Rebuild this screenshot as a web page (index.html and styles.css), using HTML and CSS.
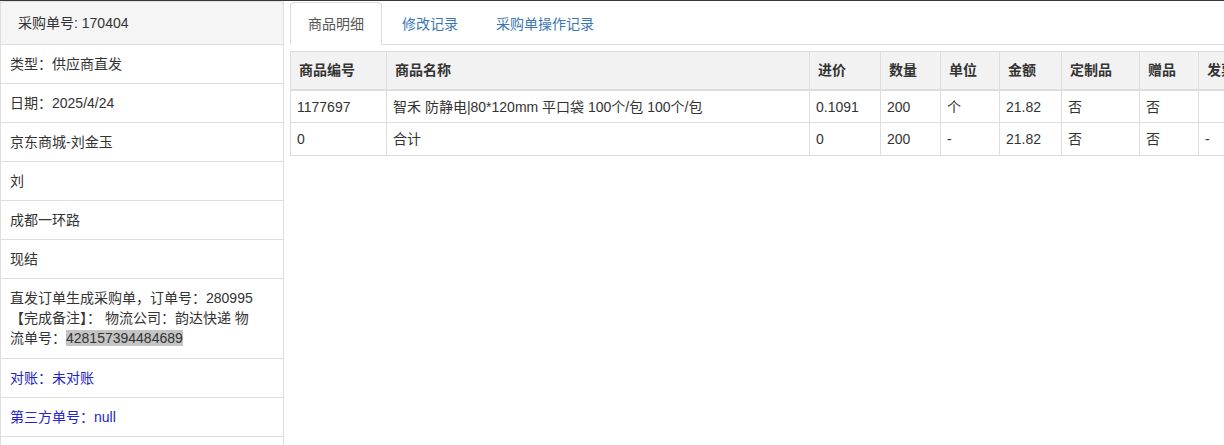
FILE: index.html
```html
<!DOCTYPE html>
<html lang="zh-CN">
<head>
<meta charset="utf-8">
<title>采购单详情</title>
<link rel="stylesheet" href="styles.css">
</head>
<body>
<div class="topbar"></div>
<div class="layout">
  <aside class="info-panel">
    <div class="panel-head">采购单号: 170404</div>
    <div class="panel-row">类型：供应商直发</div>
    <div class="panel-row">日期：2025/4/24</div>
    <div class="panel-row">京东商城-刘金玉</div>
    <div class="panel-row">刘</div>
    <div class="panel-row">成都一环路</div>
    <div class="panel-row">现结</div>
    <div class="panel-row multi">直发订单生成采购单，订单号：280995<br>【完成备注】： 物流公司：韵达快递 物<br>流单号：<span class="selected">428157394484689</span></div>
    <div class="panel-row link">对账：未对账</div>
    <div class="panel-row link">第三方单号：null</div>
    <div class="panel-row"></div>
  </aside>
  <main class="detail">
    <ul class="tabs">
      <li class="tab active"><a>商品明细</a></li>
      <li class="tab"><a>修改记录</a></li>
      <li class="tab"><a>采购单操作记录</a></li>
    </ul>
    <table class="goods">
      <colgroup>
        <col class="c-code"><col class="c-name"><col class="c-price"><col class="c-qty"><col class="c-unit"><col class="c-amt"><col class="c-custom"><col class="c-gift"><col class="c-inv">
      </colgroup>
      <thead>
        <tr><th>商品编号</th><th>商品名称</th><th>进价</th><th>数量</th><th>单位</th><th>金额</th><th>定制品</th><th>赠品</th><th>发票类型</th></tr>
      </thead>
      <tbody>
        <tr><td>1177697</td><td>智禾 防静电|80*120mm 平口袋 100个/包 100个/包</td><td>0.1091</td><td>200</td><td>个</td><td>21.82</td><td>否</td><td>否</td><td></td></tr>
        <tr class="total"><td>0</td><td>合计</td><td>0</td><td>200</td><td>-</td><td>21.82</td><td>否</td><td>否</td><td>-</td></tr>
      </tbody>
    </table>
  </main>
</div>
</body>
</html>
```
FILE: styles.css
```css
html, body {
  margin: 0;
  padding: 0;
  overflow: hidden;
  background: #fff;
}
body {
  font-family: "Liberation Sans", "Noto Sans CJK SC", sans-serif;
  font-size: 14px;
  line-height: 20px;
  color: #333;
  width: 1224px;
  height: 445px;
}
.topbar {
  height: 1px;
  background: #35383f;
}
.layout {
  display: flex;
  gap: 6px;
  align-items: flex-start;
}
.info-panel {
  width: 284px;
  flex: none;
  box-sizing: border-box;
  border-left: 1px solid #ddd;
  border-right: 1px solid #ddd;
}
.panel-head {
  height: 42px;
  line-height: 42px;
  padding: 0 17px;
  background: #f5f5f5;
  border: 1px solid #ddd;
  border-radius: 4px 4px 0 0;
  margin: 0 -1px;
}
.panel-row {
  padding: 9px 9px;
  border-bottom: 1px solid #ddd;
  min-height: 20px;
}
.panel-row.multi {
  padding-bottom: 10px;
}
.panel-row.link {
  color: #2323c6;
}
.selected {
  background: #c4c4c4;
}
.detail {
  flex: 1;
  min-width: 0;
}
.tabs {
  list-style: none;
  margin: 1px 0 0;
  padding: 0;
  display: flex;
  border-bottom: 1px solid #ddd;
}
.tab {
  margin-bottom: -1px;
  margin-right: 2px;
}
.tab a {
  display: block;
  padding: 11px 17px 10px;
  line-height: 20px;
  border: 1px solid transparent;
  border-radius: 4px 4px 0 0;
  color: #3a77b5;
}
.tab.active a {
  color: #555;
  background: #fff;
  border-color: #ddd;
  border-bottom-color: #fff;
}
.goods {
  margin-top: 6px;
  border-collapse: collapse;
  table-layout: fixed;
  width: 1008px;
}
.c-code { width: 96px; }
.c-name { width: 423px; }
.c-price { width: 71px; }
.c-qty { width: 60px; }
.c-unit { width: 59px; }
.c-amt { width: 62px; }
.c-custom { width: 78px; }
.c-gift { width: 59px; }
.c-inv { width: 100px; }
.goods th, .goods td {
  border: 1px solid #ddd;
  text-align: left;
  white-space: nowrap;
  overflow: hidden;
}
.goods th {
  background: #f2f2f2;
  font-weight: bold;
  padding: 8px 8px;
  line-height: 21px;
  border-bottom: 2px solid #ddd;
}
.goods td {
  padding: 6px 6px 5px;
  line-height: 20px;
}
.goods .total td {
  padding-top: 6px;
  padding-bottom: 6px;
}
```
